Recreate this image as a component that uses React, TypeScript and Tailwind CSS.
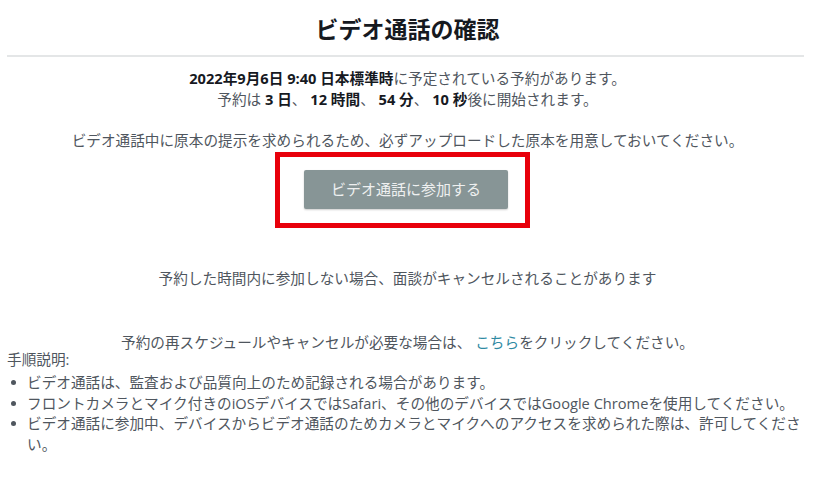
import React from "react";

const font = { fontFamily: '"Open Sans", "Noto Sans CJK JP", sans-serif' };

export default function App() {
  const bullets = [
    "ビデオ通話は、監査および品質向上のため記録される場合があります。",
    "フロントカメラとマイク付きのiOSデバイスではSafari、その他のデバイスではGoogle Chromeを使用してください。",
    "ビデオ通話に参加中、デバイスからビデオ通話のためカメラとマイクへのアクセスを求められた際は、許可してください。",
  ];
  return (
    <div
      className="w-[815px] h-[482px] bg-white text-[#4f565e] text-[14.65px] overflow-hidden"
      style={font}
    >
      <h1 className="pt-[15px] text-center text-[23px] leading-[29px] font-bold text-[#16191f]">
        ビデオ通話の確認
      </h1>
      <div className="ml-[7px] mr-[11px] mt-[11px] h-[2px] bg-[#e4e6e7]" />
      <div className="mt-[11px] text-center leading-[21px]">
        <p>
          <span className="font-bold text-[#16191f]">2022年9月6日 9:40 日本標準時</span>
          に予定されている予約があります。
        </p>
        <p>
          予約は <span className="font-bold text-[#16191f]">3 日</span>、{" "}
          <span className="font-bold text-[#16191f]">12 時間</span>、{" "}
          <span className="font-bold text-[#16191f]">54 分</span>、{" "}
          <span className="font-bold text-[#16191f]">10 秒</span>後に開始されます。
        </p>
      </div>
      <p className="mt-[20px] text-center leading-[21px]">
        ビデオ通話中に原本の提示を求められるため、必ずアップロードした原本を用意しておいてください。
      </p>
      <div className="mt-[19px] flex justify-center">
        <div className="relative ml-[-3px]">
          <button className="w-[204px] h-[39px] rounded-[2px] bg-[#879596] text-[#eef0f0] text-[15px] shadow-[0_1px_2px_rgba(0,0,0,0.2)]">
            ビデオ通話に参加する
          </button>
          <div className="absolute left-[-29px] right-[-22px] top-[-18px] bottom-[-19px] border-[5px] border-[#e8000b] pointer-events-none" />
        </div>
      </div>
      <p className="mt-[59px] text-center leading-[21px]">
        予約した時間内に参加しない場合、面談がキャンセルされることがあります
      </p>
      <p className="mt-[43px] text-center leading-[20px]">
        予約の再スケジュールやキャンセルが必要な場合は、{" "}
        <a className="text-[#2f8aa3]">こちら</a>をクリックしてください。
      </p>
      <p className="ml-[7px] mt-[-2px] leading-[18px]">手順説明:</p>
      <ul className="mt-[4px] mr-[7px]">
        {bullets.map((b, i) => (
          <li key={i} className="flex leading-[20.7px]">
            <span className="w-[27px] shrink-0 flex justify-start pl-[11px] pt-[8px]">
              <span className="block w-[5px] h-[5px] rounded-full bg-[#4f565e]" />
            </span>
            <span>{b}</span>
          </li>
        ))}
      </ul>
    </div>
  );
}
